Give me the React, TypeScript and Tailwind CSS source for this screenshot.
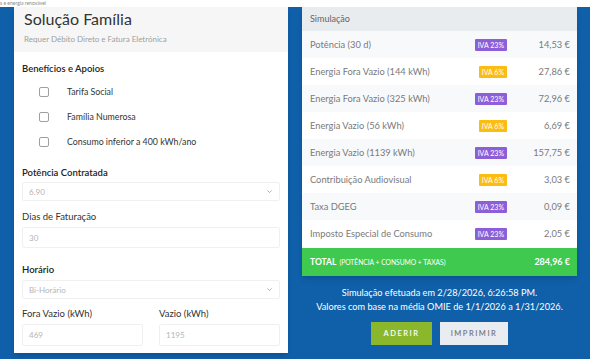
import React from "react";

const rows: { label: string; iva: "23" | "6"; value: string }[] = [
  { label: "Potência (30 d)", iva: "23", value: "14,53 €" },
  { label: "Energia Fora Vazio (144 kWh)", iva: "6", value: "27,86 €" },
  { label: "Energia Fora Vazio (325 kWh)", iva: "23", value: "72,96 €" },
  { label: "Energia Vazio (56 kWh)", iva: "6", value: "6,69 €" },
  { label: "Energia Vazio (1139 kWh)", iva: "23", value: "157,75 €" },
  { label: "Contribuição Audiovisual", iva: "6", value: "3,03 €" },
  { label: "Taxa DGEG", iva: "23", value: "0,09 €" },
  { label: "Imposto Especial de Consumo", iva: "23", value: "2,05 €" },
];

function Chevron() {
  return (
    <svg width="7" height="7" viewBox="0 0 10 10" fill="none" stroke="#9ca3af" strokeWidth="1.3">
      <path d="M2 3.5 L5 6.5 L8 3.5" />
    </svg>
  );
}

function Checkbox({ label }: { label: string }) {
  return (
    <div className="flex items-center h-[25px]">
      <div className="ml-[17px] w-[10px] h-[10px] border border-[#9aa0a6] rounded-[2px] bg-white" />
      <span className="ml-[18px] text-[8.8px] text-[#333]">{label}</span>
    </div>
  );
}

export default function App() {
  return (
    <div
      className="w-[590px] h-[359px] overflow-hidden flex flex-col bg-[#0f5fa9]"
      style={{ fontFamily: "Lato, 'Open Sans', sans-serif" }}
    >
      <div className="h-[7px] bg-white flex items-start overflow-hidden">
        <span className="text-[5px] leading-[6px] text-[#888]">s e energia renovável</span>
      </div>
      <div className="flex-1 flex items-start pl-[14px] pr-[13px] gap-[14px]">
        {/* Left card */}
        <div className="w-[274px] h-[346px] bg-white flex flex-col shadow-md">
          <div className="h-[45px] bg-[#f6f6f6] px-[10px] flex flex-col">
            <div className="text-[16px] leading-[20px] text-[#333] mt-[2px]">Solução Família</div>
            <div className="text-[8px] text-[#a0a0a0] mt-[4px]">Requer Débito Direto e Fatura Eletrónica</div>
          </div>
          <div className="px-[8px] flex flex-col">
            <div className="text-[9.5px] font-semibold text-[#222] mt-[11px] leading-[12px]">Benefícios e Apoios</div>
            <div className="mt-[4px] flex flex-col">
              <Checkbox label="Tarifa Social" />
              <Checkbox label="Família Numerosa" />
              <Checkbox label="Consumo inferior a 400 kWh/ano" />
            </div>
            <div className="text-[9.5px] font-semibold text-[#222] mt-[13px] leading-[12px]">Potência Contratada</div>
            <div className="mt-[3px] h-[19px] border border-[#f0f0f0] rounded-[2px] flex items-center justify-between px-[6px]">
              <span className="text-[8px] text-[#b5b5b5]">6.90</span>
              <Chevron />
            </div>
            <div className="text-[9.5px] text-[#333] mt-[10px] leading-[12px]">Dias de Faturação</div>
            <div className="mt-[4px] h-[21px] border border-[#f0f0f0] rounded-[2px] flex items-center px-[6px]">
              <span className="text-[8px] text-[#b5b5b5]">30</span>
            </div>
            <div className="text-[9.5px] font-semibold text-[#222] mt-[16px] leading-[12px]">Horário</div>
            <div className="mt-[4px] h-[19px] border border-[#f0f0f0] rounded-[2px] flex items-center justify-between px-[6px]">
              <span className="text-[8px] text-[#b5b5b5]">Bi-Horário</span>
              <Chevron />
            </div>
            <div className="flex gap-[16px] mt-[9px]">
              <div className="flex-1 flex flex-col">
                <div className="text-[9.5px] text-[#333] leading-[12px]">Fora Vazio (kWh)</div>
                <div className="mt-[4px] h-[22px] border border-[#f0f0f0] rounded-[2px] flex items-center px-[6px]">
                  <span className="text-[8px] text-[#b5b5b5]">469</span>
                </div>
              </div>
              <div className="flex-1 flex flex-col">
                <div className="text-[9.5px] text-[#333] leading-[12px]">Vazio (kWh)</div>
                <div className="mt-[4px] h-[22px] border border-[#f0f0f0] rounded-[2px] flex items-center px-[6px]">
                  <span className="text-[8px] text-[#b5b5b5]">1195</span>
                </div>
              </div>
            </div>
          </div>
        </div>

        {/* Right panel */}
        <div className="flex-1 flex flex-col">
          <div className="bg-white shadow-md">
            <div className="h-[24px] bg-[#e9ecef] flex items-center px-[8px] text-[9px] text-[#666]">Simulação</div>
            {rows.map((r, i) => (
              <div
                key={i}
                className={`h-[27px] flex items-center pl-[8px] pr-[7px] ${i % 2 === 0 ? "bg-[#f8f9fb]" : "bg-white"}`}
              >
                <span className="flex-1 text-[9.3px] text-[#7a7a7a]">{r.label}</span>
                <div className="w-[34px] flex justify-end">
                  {r.iva === "23" ? (
                    <span className="bg-[#8c5fd8] text-white text-[7px] leading-[12px] h-[12px] px-[3px] rounded-[1px]">IVA 23%</span>
                  ) : (
                    <span className="bg-[#fbbd12] text-white text-[7px] leading-[12px] h-[12px] px-[3px] rounded-[1px]">IVA 6%</span>
                  )}
                </div>
                <span className="w-[63px] text-right text-[9.3px] text-[#7a7a7a]">{r.value}</span>
              </div>
            ))}
            <div className="h-[28px] bg-[#3fca4f] flex items-center pl-[8px] pr-[7px] mt-[1px]">
              <span className="text-[8.5px] font-bold text-white">TOTAL</span>
              <span className="ml-[3px] text-[6.7px] text-white uppercase">(Potência + Consumo + Taxas)</span>
              <span className="ml-auto text-[9px] font-bold text-white">284,96 €</span>
            </div>
          </div>
          <div className="mt-[10px] text-center text-[9.2px] text-white leading-[14px]">
            Simulação efetuada em 2/28/2026, 6:26:58 PM.
          </div>
          <div className="text-center text-[9.2px] text-white leading-[14px]">
            Valores com base na média OMIE de 1/1/2026 a 1/31/2026.
          </div>
          <div className="flex justify-center gap-[8px] mt-[8px]">
            <div className="w-[61px] h-[23px] bg-[#8bb72d] flex items-center justify-center text-[7.5px] text-white font-semibold tracking-[1.5px]">
              ADERIR
            </div>
            <div className="w-[68px] h-[23px] bg-[#e9ecf1] flex items-center justify-center text-[7.5px] text-[#777] font-semibold tracking-[1.5px]">
              IMPRIMIR
            </div>
          </div>
        </div>
      </div>
    </div>
  );
}
